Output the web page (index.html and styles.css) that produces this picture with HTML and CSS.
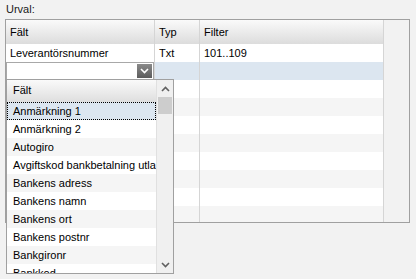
FILE: index.html
```html
<!DOCTYPE html>
<html lang="sv">
<head>
    <meta charset="UTF-8">
    <title>Urval</title>
    <link rel="stylesheet" href="styles.css">
</head>
<body>
    <div class="label">Urval:</div>
    <div class="grid">
        <div class="table">
            <div class="row head">
                <div class="cell c1">Fält</div>
                <div class="cell c2">Typ</div>
                <div class="cell c3">Filter</div>
            </div>
            <div class="row">
                <div class="cell c1">Leverantörsnummer</div>
                <div class="cell c2">Txt</div>
                <div class="cell c3">101..109</div>
            </div>
            <div class="row sel">
                <div class="cell c1 edit">
                    <div class="combo">
                        <span class="combo-btn">
                            <svg width="9" height="6" viewBox="0 0 9 6"><path d="M1 1 L4.5 4.5 L8 1" fill="none" stroke="#fff" stroke-width="1.6"/></svg>
                        </span>
                    </div>
                </div>
                <div class="cell c2"></div>
                <div class="cell c3"></div>
            </div>
            <div class="row"><div class="cell c1"></div><div class="cell c2"></div><div class="cell c3"></div></div>
            <div class="row alt"><div class="cell c1"></div><div class="cell c2"></div><div class="cell c3"></div></div>
            <div class="row"><div class="cell c1"></div><div class="cell c2"></div><div class="cell c3"></div></div>
            <div class="row alt"><div class="cell c1"></div><div class="cell c2"></div><div class="cell c3"></div></div>
            <div class="row"><div class="cell c1"></div><div class="cell c2"></div><div class="cell c3"></div></div>
            <div class="row alt"><div class="cell c1"></div><div class="cell c2"></div><div class="cell c3"></div></div>
            <div class="row"><div class="cell c1"></div><div class="cell c2"></div><div class="cell c3"></div></div>
            <div class="row alt"><div class="cell c1"></div><div class="cell c2"></div><div class="cell c3"></div></div>
        </div>
        <div class="spare"></div>

        <div class="dropdown">
            <div class="list">
                <div class="list-head">Fält</div>
                <div class="item focus">Anmärkning 1</div>
                <div class="item">Anmärkning 2</div>
                <div class="item">Autogiro</div>
                <div class="item">Avgiftskod bankbetalning utland</div>
                <div class="item">Bankens adress</div>
                <div class="item">Bankens namn</div>
                <div class="item">Bankens ort</div>
                <div class="item">Bankens postnr</div>
                <div class="item">Bankgironr</div>
                <div class="item">Bankkod</div>
            </div>
            <div class="scroll">
                <div class="arrow">
                    <svg width="9" height="6" viewBox="0 0 9 6"><path d="M1 5 L4.5 1.5 L8 5" fill="none" stroke="#606060" stroke-width="1.6"/></svg>
                </div>
                <div class="thumb"></div>
                <div class="track"></div>
                <div class="arrow">
                    <svg width="9" height="6" viewBox="0 0 9 6"><path d="M1 1 L4.5 4.5 L8 1" fill="none" stroke="#606060" stroke-width="1.6"/></svg>
                </div>
            </div>
        </div>
    </div>
</body>
</html>
```

FILE: styles.css
```css
html, body { height: 100%; }
body { margin: 0; min-height: 279px; background: #f2f2f2; font-family: "Liberation Sans", Arial, sans-serif; font-size: 11px; color: #000; }
.label { padding: 3px 0 0 6px; height: 16px; color: #1a1a1a; }
.grid { position: relative; z-index: 1; margin-left: 5px; width: 403px; height: 202px; border: 1px solid #a0a0a0; display: flex; background: #f2f2f2; }
.table { width: 377px; height: 202px; overflow: hidden; background: #fff; }
.spare { flex: 1; background: #f2f2f2; border-left: 1px solid #d5d5d5; }
.row { display: flex; height: 18px; background: #fff; }
.row.alt { background: #f5f5f5; }
.row.sel { background: #dce6f0; }
.row.head { height: 24px; background: linear-gradient(#fafafa, #dcdcdc); }
.cell { line-height: 18px; padding-left: 4px; box-sizing: border-box; white-space: nowrap; overflow: hidden; }
.head .cell { line-height: 24px; border-right: 1px solid #d5d5d5; }
.c1 { width: 149px; border-right: 1px solid #d5d5d5; }
.c2 { width: 45px; border-right: 1px solid #d5d5d5; }
.c3 { flex: 1; border-right: none; }
.head .c3 { border-right: none; }
.cell.edit { padding: 0; }
.combo { height: 18px; background: #fff; border: 1px solid #a8a8a8; box-sizing: border-box; display: flex; justify-content: flex-end; }
.combo-btn { width: 15px; height: 14px; margin: 1px 1px 0 0; background: linear-gradient(#8a8a8a, #5c5c5c); display: flex; align-items: center; justify-content: center; }
.dropdown { position: absolute; z-index: 2; left: 0; top: 59px; width: 166px; height: 193px; border: 1px solid #a0a0a0; display: flex; background: #fff; }
.list { width: 150px; overflow: hidden; }
.list-head { height: 22px; line-height: 21px; padding-left: 6px; background: linear-gradient(#fafafa, #dedede); }
.item { height: 18px; line-height: 18px; padding-left: 6px; white-space: nowrap; background: #fff; }
.item:nth-child(even) { background: #f5f5f5; }
.item.focus { background: #dce6f0; outline: 1px dotted #000; outline-offset: -1px; }
.scroll { width: 16px; background: #f0f0f0; border-left: 1px solid #e0e0e0; display: flex; flex-direction: column; }
.arrow { height: 17px; display: flex; align-items: center; justify-content: center; }
.thumb { height: 17px; margin: 0 1px; background: #cdcdcd; }
.track { flex: 1; }
```
